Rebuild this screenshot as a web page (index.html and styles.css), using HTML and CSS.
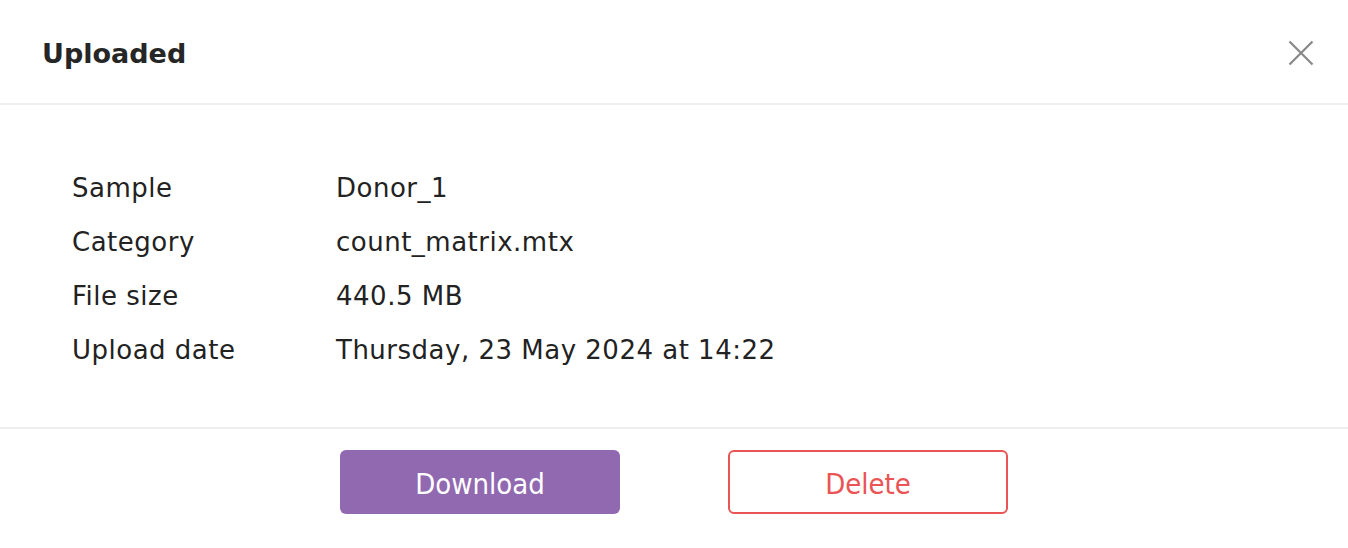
FILE: index.html
```html
<!DOCTYPE html>
<html lang="en">
<head>
<meta charset="utf-8">
<title>Uploaded</title>
<link rel="stylesheet" href="styles.css">
</head>
<body>
<div class="modal">
  <header class="modal-header">
    <h1 class="modal-title">Uploaded</h1>
    <button class="close-btn" aria-label="Close">
      <svg width="26" height="26" viewBox="0 0 26 26"><path d="M1.5 1.5 L24.5 24.5 M24.5 1.5 L1.5 24.5" stroke="#888" stroke-width="2.2" fill="none"/></svg>
    </button>
  </header>
  <section class="modal-body">
    <dl class="details">
      <dt>Sample</dt><dd>Donor_1</dd>
      <dt>Category</dt><dd>count_matrix.mtx</dd>
      <dt>File size</dt><dd>440.5 MB</dd>
      <dt>Upload date</dt><dd>Thursday, 23 May 2024 at 14:22</dd>
    </dl>
  </section>
  <footer class="modal-footer">
    <button class="btn btn-primary">Download</button>
    <button class="btn btn-danger">Delete</button>
  </footer>
</div>
</body>
</html>
```
FILE: styles.css
```css
* { box-sizing: border-box; }
html, body { margin: 0; padding: 0; background: #fff; }
body {
  font-family: "DejaVu Sans", sans-serif;
  color: #222;
  width: 1348px;
  height: 548px;
  overflow: hidden;
}
.modal { display: flex; flex-direction: column; }
.modal-header {
  height: 105px;
  border-bottom: 2px solid #eeeeee;
  display: flex;
  align-items: center;
  justify-content: space-between;
  padding: 3px 34px 0 42px;
}
.modal-title {
  margin: 0;
  font-size: 27px;
  font-weight: 600;
  color: #262626;
}
.close-btn {
  border: 0;
  background: none;
  padding: 0;
  width: 26px;
  height: 26px;
  cursor: pointer;
  display: flex;
}
.modal-body {
  height: 324px;
  border-bottom: 2px solid #eeeeee;
  padding: 56px 72px 0;
}
.details {
  margin: 0;
  display: grid;
  grid-template-columns: 264px 1fr;
  grid-auto-rows: 54px;
  align-items: center;
  font-size: 26px;
  letter-spacing: 0.5px;
  color: #222;
}
.details dt, .details dd { margin: 0; }
.modal-footer {
  display: flex;
  justify-content: center;
  gap: 108px;
  padding-top: 21px;
}
.btn {
  width: 280px;
  height: 64px;
  border-radius: 6px;
  font-family: "DejaVu Sans Condensed", "DejaVu Sans", sans-serif;
  font-size: 29px;
  cursor: pointer;
  padding: 3px 0 0;
}
.btn-primary {
  background: #9169b1;
  color: #fff;
  border: 0;
}
.btn-danger {
  background: #fff;
  color: #ea5455;
  border: 2px solid #ea5455;
}
```
